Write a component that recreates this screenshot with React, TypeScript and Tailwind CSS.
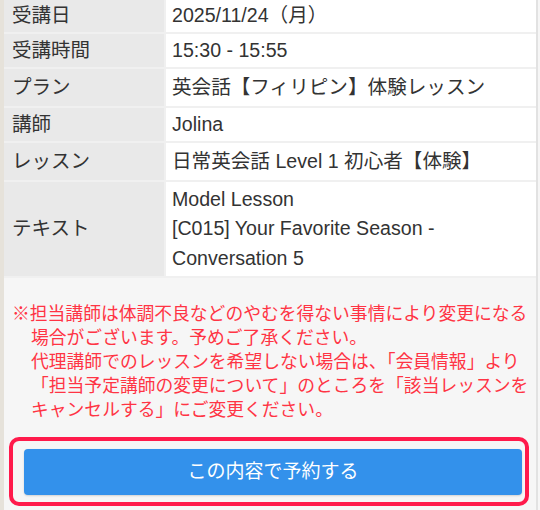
import React from "react";

const rows: { label: string; value: React.ReactNode; h: string; tall?: boolean }[] = [
  { label: "受講日", value: "2025/11/24（月）", h: "h-[32px]" },
  { label: "受講時間", value: "15:30 - 15:55", h: "h-[33px]" },
  { label: "プラン", value: "英会話【フィリピン】体験レッスン", h: "h-[37px]" },
  { label: "講師", value: "Jolina", h: "h-[33px]" },
  { label: "レッスン", value: "日常英会話 Level 1 初心者【体験】", h: "h-[37px]" },
  {
    label: "テキスト",
    value: (
      <>
        Model Lesson
        <br />
        [C015] Your Favorite Season -
        <br />
        Conversation 5
      </>
    ),
    h: "h-[94px]",
    tall: true,
  },
];

export default function App() {
  return (
    <div
      className="w-[540px] h-[510px] overflow-hidden bg-[#f6f6f6] flex"
      style={{ fontFamily: '"Liberation Sans", "Noto Sans CJK JP", sans-serif' }}
    >
      <div className="w-[4px] bg-[#e6e2da] shrink-0" />
      <div className="flex-1 flex flex-col border-r-2 border-[#e2e2e2] mr-[2px]">
        <div className="flex flex-col gap-[2px] bg-[#f0f0f0] pb-[2px]">
          {rows.map((r, i) => (
            <div key={i} className={"flex gap-[2px] " + r.h}>
              <div className="w-[160px] shrink-0 bg-[#e9e9e9] flex items-center pl-[8px] text-[19.5px] text-[#333]">
                {r.label}
              </div>
              <div
                className={
                  "flex-1 bg-white flex items-center pl-[6px] text-[19.6px] text-[#333] " +
                  (r.tall ? "leading-[29.5px]" : "leading-none")
                }
              >
                <div>{r.value}</div>
              </div>
            </div>
          ))}
        </div>
        <div className="flex-1 flex flex-col">
          <div className="pt-[24px] pl-[8px] text-[17.8px] leading-[24px] text-[#ff3444] whitespace-nowrap">
            <div>※担当講師は体調不良などのやむを得ない事情により変更になる</div>
            <div className="pl-[19px]">
              場合がございます。予めご了承ください。
              <br />
              代理講師でのレッスンを希望しない場合は、「会員情報」より
              <br />
              「担当予定講師の変更について」のところを「該当レッスンを
              <br />
              キャンセルする」にご変更ください。
            </div>
          </div>
          <div className="mt-[15px] ml-[5px] mr-[7px] border-[4px] border-[#ff1a4b] rounded-[10px] pl-[11px] pr-[3px] pt-[8px] pb-[7px]">
            <button className="w-full h-[46px] bg-[#3391eb] rounded-[4px] text-white text-[19px] flex items-center justify-center shadow-[0_1px_2px_rgba(0,0,0,0.15)]">
              この内容で予約する
            </button>
          </div>
        </div>
      </div>
    </div>
  );
}
